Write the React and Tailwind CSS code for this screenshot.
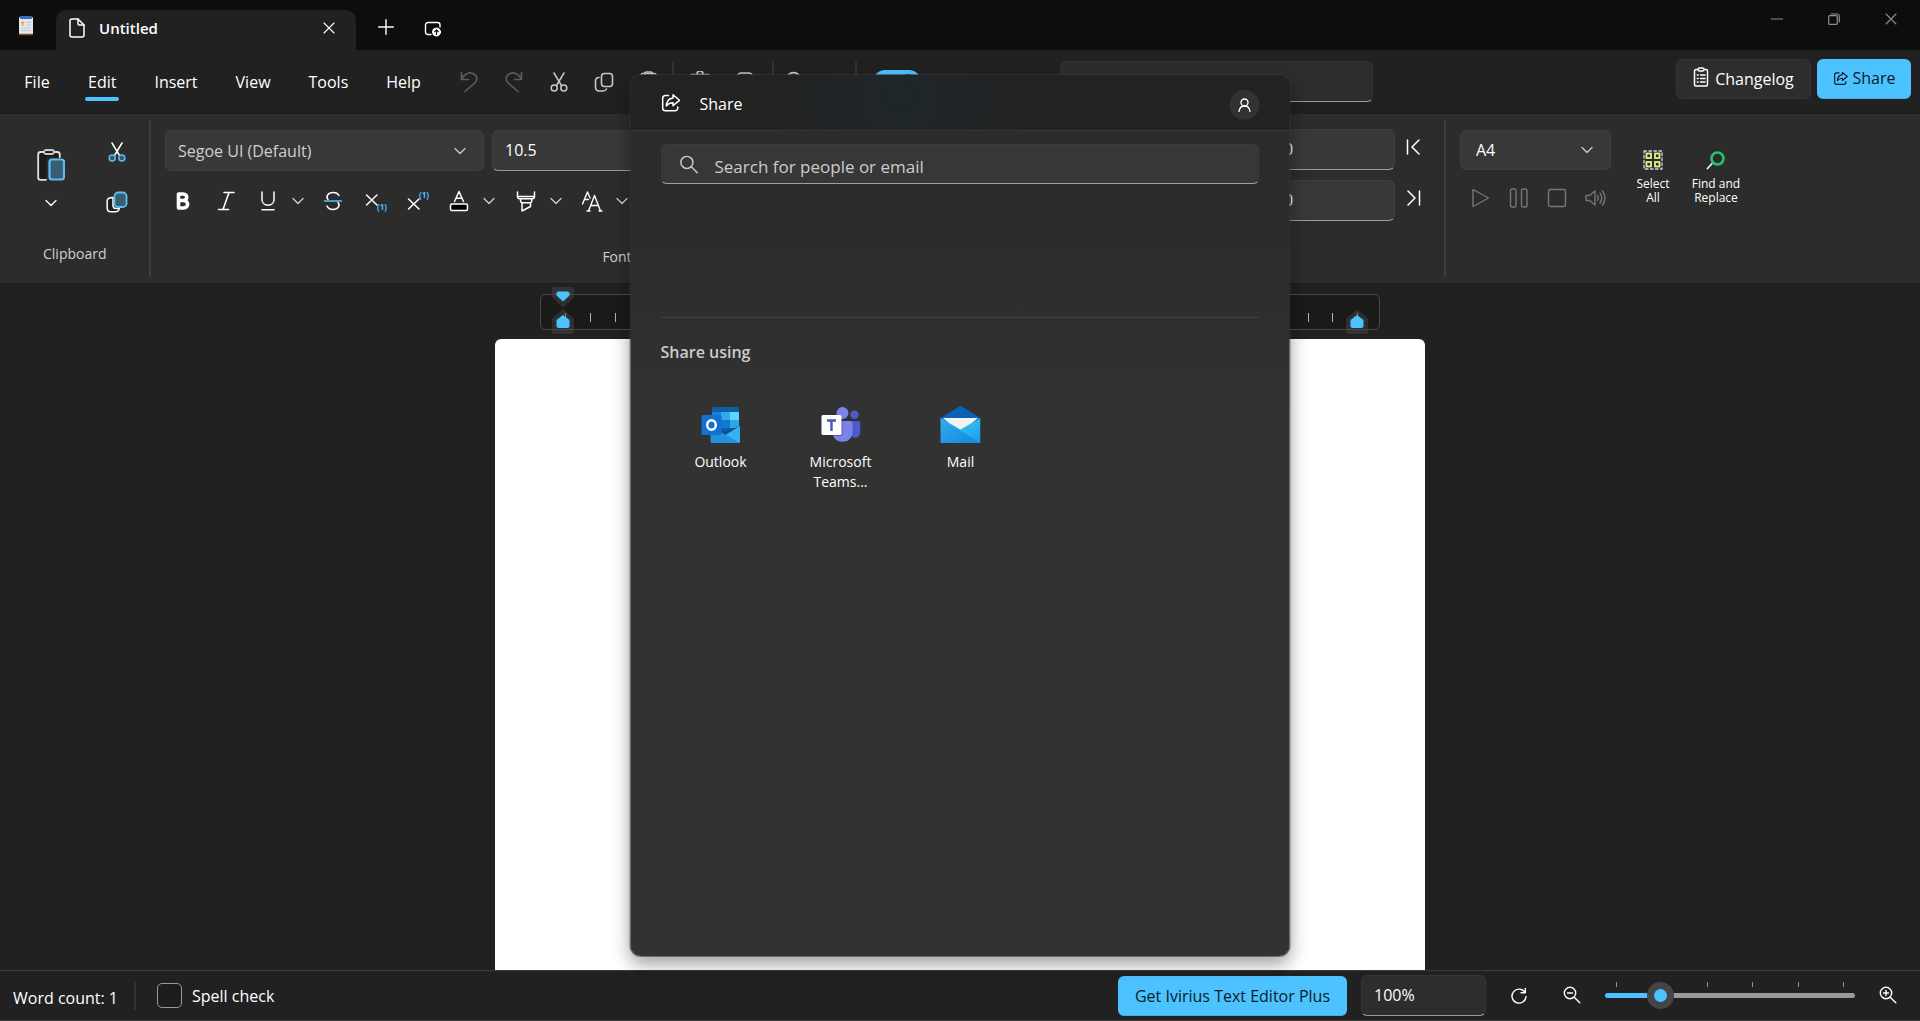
const BLUE = "#4cc2ff";

function Icon({ size = 20, w = size, h = size, box, stroke = 1.3, className = "", children }) {
  return (
    <svg
      width={w}
      height={h}
      viewBox={box || `0 0 ${w} ${h}`}
      fill="none"
      stroke="currentColor"
      strokeWidth={stroke}
      strokeLinecap="round"
      strokeLinejoin="round"
      aria-hidden="true"
      className={`shrink-0 ${className}`}
    >
      {children}
    </svg>
  );
}

const Chevron = ({ className = "" }) => (
  <Icon w={12} h={8} className={className}>
    <path d="M1 1.5 6 6.5l5-5" />
  </Icon>
);

const ShareIcon = ({ size = 20 }) => (
  <Icon size={size} box="0 0 20 20" stroke={1.5}>
    <path d="M8 2.500H5A2.800 2.800 0 0 0 2.200 5.300V15A2.800 2.800 0 0 0 5 17.800h9.500A2.800 2.800 0 0 0 17.300 15v-1" />
    <path d="M12.500 1.800 19 7.300l-6.500 5.400V9.700C9.500 9.600 7.500 10.700 5.800 13c.3-4.400 2.700-7.600 6.700-8.100Z" />
  </Icon>
);

const Scissors = ({ ring = "currentColor", fill = "none" }) => (
  <Icon w={18} h={20} stroke={1.5}>
    <path d="m4 1 7.500 12.500M14 1 6.500 13.500" />
    <circle cx="4.200" cy="16" r="3" stroke={ring} fill={fill} />
    <circle cx="13.800" cy="16" r="3" stroke={ring} fill={fill} />
  </Icon>
);

const CopyIcon = () => (
  <Icon w={20} h={20} stroke={1.6}>
    <rect x="7.500" y="1.500" width="11" height="13" rx="3" />
    <path d="M5 5.500C2.500 5.500 1.500 7 1.500 9v6c0 2.500 1.500 4 4 4H9c2 0 3-1 3.500-2" />
  </Icon>
);

const Magnifier = ({ size = 18, sign }) => (
  <Icon size={size} box="0 0 18 18" stroke={1.4}>
    <circle cx="7" cy="7" r="5.700" />
    <path d="m11.200 11.200 5.600 5.600" />
    {sign && <path d="M4.500 7h5" />}
    {sign === "plus" && <path d="M7 4.500v5" />}
  </Icon>
);

const Close = ({ size = 12 }) => (
  <Icon size={size} box="0 0 12 12" stroke={1.1}>
    <path d="m1 1 10 10M11 1 1 11" />
  </Icon>
);

function TitleBar() {
  return (
    <header className="flex h-[50px] shrink-0 items-end bg-[#0d0d0d]">
      <div className="flex w-[56px] self-start justify-center pt-4 pr-1">
        <svg width="18" height="20" viewBox="0 0 18 20" aria-hidden="true">
          <rect x="2" y="1" width="14" height="18" rx="1" fill="#e4e8ec" />
          <rect x="3" width="12" height="3" rx="1" fill="#3a6fb5" />
          <path d="M2 18.500h14" stroke="#8a4b2c" strokeWidth="1.500" />
          <path d="M4 6.500h3.500M5.700 6.500v3.500" stroke="#f0a040" strokeWidth="1.300" />
          <path d="M9 6.500h5M9 9h5M4 12h10M4 14.500h10" stroke="#c2c8ce" />
        </svg>
      </div>
      <div className="flex h-[40px] w-[300px] items-center rounded-t-[10px] bg-[#212121] pb-1 pl-[13px] pr-[15px]">
        <Icon w={16} h={20} stroke={1.5}>
          <path d="M3 1h6l6 6v10a2 2 0 0 1-2 2H3a2 2 0 0 1-2-2V3a2 2 0 0 1 2-2Z" />
          <path d="M9 1v4.500C9 6.500 9.500 7 10.500 7H15" />
        </Icon>
        <span className="ml-[14px] flex-1 text-[15px] font-semibold">Untitled</span>
        <button aria-label="Close tab" className="flex h-6 w-6 items-center justify-center">
          <Close />
        </button>
      </div>
      <div className="flex items-center self-start pt-[9px]">
        <button aria-label="New tab" className="ml-3 flex h-9 w-9 items-center justify-center">
          <Icon size={16} stroke={1.4}>
            <path d="M8 .700v14.600M.700 8h14.600" />
          </Icon>
        </button>
        <button aria-label="Move tab to new window" className="ml-[11px] flex h-9 w-9 items-center justify-center pt-1">
          <Icon w={18} h={16} stroke={1.4}>
            <path d="M7 13.500H4A2.500 2.500 0 0 1 1.500 11V4A2.500 2.500 0 0 1 4 1.500h9.500A2.500 2.500 0 0 1 16 4v2" />
            <circle cx="12.500" cy="11" r="4" fill="#fff" stroke="#fff" strokeWidth="1" />
            <path d="M12.500 13.300V9m-1.800 1.700 1.800-1.800 1.800 1.800" stroke="#0d0d0d" strokeWidth="1.200" />
          </Icon>
        </button>
      </div>
      <div className="ml-auto flex h-[37px] self-start pr-px text-[#8e8e8e]">
        <button aria-label="Minimize" className="flex w-[57px] items-center justify-center">
          <Icon size={12} stroke={1.2}><path d="M0 6h12" /></Icon>
        </button>
        <button aria-label="Restore" className="flex w-[57px] items-center justify-center">
          <Icon size={12} stroke={1.2}>
            <rect x=".700" y="2.700" width="8.600" height="8.600" rx="1" />
            <path d="M3 1h6.500A2 2 0 0 1 11.300 2.800V9" />
          </Icon>
        </button>
        <button aria-label="Close" className="flex w-[57px] items-center justify-center">
          <Close />
        </button>
      </div>
    </header>
  );
}

const toolButton = "flex h-9 w-[45px] items-center justify-center";
const divider = "h-10 w-[2px] shrink-0 bg-[#333333]";

function MenuBar() {
  return (
    <nav className="flex h-16 shrink-0 items-center border-b border-[#1c1c1c] bg-[#212121]">
      <div className="flex pl-[5px]">
        {["File", "Edit", "Insert", "View", "Tools", "Help"].map((m) => (
          <button key={m} className="flex flex-col items-center px-[19px] pt-2 leading-6">
            {m}
            <span className={`mt-[3px] h-1 w-[34px] -mx-1 rounded-full ${m === "Edit" ? "bg-[#4cc2ff]" : ""}`} />
          </button>
        ))}
      </div>
      <div className="ml-[7px] flex items-center text-[#c8c8c8]">
        <button aria-label="Undo" disabled className={`${toolButton} text-[#5c5c5c]`}>
          <Icon w={18} h={22} stroke={1.6}>
            <path d="M1.500 1.500v7h7M1.500 8C5 2.500 9 .800 13 2.500c4.500 2 4.800 6.500 2 9.300L5 20.500" />
          </Icon>
        </button>
        <button aria-label="Redo" disabled className={`${toolButton} text-[#5c5c5c]`}>
          <Icon w={18} h={22} stroke={1.6}>
            <path d="M16.500 1.500v7h-7M16.500 8C13 2.500 9 .800 5 2.500c-4.500 2-4.800 6.500-2 9.300l10 8.700" />
          </Icon>
        </button>
        <button aria-label="Cut" className={toolButton}><Scissors /></button>
        <button aria-label="Copy" className={toolButton}><CopyIcon /></button>
        <button aria-label="Paste" className={toolButton}>
          <Icon w={20} h={22} stroke={1.6}>
            <rect x="2" y="2.500" width="15" height="18" rx="2" />
            <rect x="5.500" y="1" width="8" height="3.500" rx="1.700" />
          </Icon>
        </button>
        <span className={divider} />
        <button aria-label="Delete" className="ml-1 flex h-9 w-[45px] items-center justify-center">
          <Icon w={20} h={22} stroke={1.6}>
            <path d="M1 3.500h18M7 3a3 3 0 0 1 6 0M3.500 4l1.300 15h10.400L16.500 4" />
          </Icon>
        </button>
        <button aria-label="Select" className={toolButton}>
          <Icon w={18} h={22} stroke={1.6}><rect x="1.500" y="2" width="15" height="18" rx="4" /></Icon>
        </button>
        <span className={`${divider} ml-1`} />
        <button aria-label="Find" className={toolButton}><Magnifier size={22} /></button>
        <span className={`${divider} ml-[36px]`} />
        <label className="ml-4 flex h-6 w-12 items-center justify-end rounded-full bg-[#4cc2ff] p-1 pr-[5px]">
          <input type="checkbox" defaultChecked aria-label="AutoSave" className="h-4 w-4 appearance-none rounded-full bg-[#0d2a3a]" />
        </label>
      </div>
      <input
        aria-label="Search commands"
        className="ml-[139px] mb-px h-[41px] w-[313px] min-w-0 rounded-md border border-[#333] border-b-[#9a9a9a] bg-[#2d2d2d] px-3 outline-none"
      />
      <div className="ml-auto flex gap-[6px] pr-[9px]">
        <button className="mb-[6px] flex h-10 w-[135px] items-center justify-center gap-[6px] rounded-md border border-[#343434] bg-[#2d2d2d]">
          <Icon w={16} h={20} stroke={1.5} className="mb-[3px]">
            <rect x="1.500" y="2.500" width="13" height="16.500" rx="1.500" />
            <rect x="5" y="1" width="6" height="3" rx="1.500" fill="#2d2d2d" />
            <path d="M7.500 8H12M7.500 11.500H12M7.500 15H12M4.300 8h.800M4.300 11.500h.800M4.300 15h.800" />
          </Icon>
          Changelog
        </button>
        <button className="mb-[6px] flex h-10 w-[94px] items-center justify-center gap-[5px] rounded-md border-b border-[#43aee5] bg-[#4cc2ff] text-[#0a1c26]">
          <ShareIcon size={15} />
          Share
        </button>
      </div>
    </nav>
  );
}

function Select({ label, value, className, pad = "px-[12px]" }) {
  return (
    <div className={`relative flex items-center ${className}`}>
      <select
        aria-label={label}
        defaultValue={value}
        className={`h-full w-full appearance-none rounded-md border border-[#3f3f3f] bg-[#383838] outline-none ${pad}`}
      >
        <option>{value}</option>
      </select>
      <Chevron className="pointer-events-none absolute right-[18px] text-[#cccccc]" />
    </div>
  );
}

const field =
  "h-[41px] rounded-md border border-[#3f3f3f] border-b-[#9a9a9a] bg-[#383838] px-[12px] pb-[2px] outline-none";
const fmtButton = "flex h-8 w-[30px] items-center justify-center";
const groupLine = "my-[6px] w-[2px] shrink-0 bg-[#3d3d3d]";

function ScriptIcon({ up }) {
  return (
    <Icon w={22} h={22} stroke={1.5}>
      <path d={up ? "M1.500 9 12 19M12 9 1.500 19" : "M1.500 5 12 15M12 5 1.500 15"} />
      <text
        x="12"
        y={up ? 8 : 20}
        fontSize="8"
        fontWeight="700"
        fontFamily="Open Sans, sans-serif"
        fill={BLUE}
        stroke="none"
      >
        (1)
      </text>
    </Icon>
  );
}

function ClipboardGroup() {
  return (
    <section className="flex w-[149px] shrink-0 flex-col">
      <div className="mt-[23px] flex h-[80px] pl-[30px]">
        <button aria-label="Paste" className="flex w-[42px] flex-col items-center pt-[12px]">
          <Icon w={28} h={32} stroke={1.8}>
            <path d="M8 3H3.500C2 3 1.200 4 1.200 5.500v23c0 1.500.800 2.300 2.300 2.300H9.500V8.500h12V5.500C21.500 4 20.500 3 19 3h-3Z" fill="#1c1c1c" stroke="none" />
            <path d="M7 3H3.500C2 3 1.200 4 1.200 5.500v23c0 1.500.800 2.300 2.300 2.300H9M17 3h3c1.500 0 2.800 1 2.800 2.500V8" stroke="#e0e0e0" />
            <rect x="7" y="1" width="10" height="4" rx="2" stroke="#c8c8c8" />
            <rect x="12.500" y="10.500" width="14.500" height="20" rx="2.500" fill="#3a5d72" stroke="#5cbdf0" strokeWidth="2.200" />
          </Icon>
          <Chevron className="mt-[18px]" />
        </button>
        <div className="ml-[25px] flex w-[40px] flex-col items-center gap-[29px] pt-[5px]">
          <button aria-label="Cut"><Scissors ring="#5cbdf0" fill="#2f5873" /></button>
          <button aria-label="Copy">
            <Icon w={22} h={22} stroke={1.5}>
              <path d="M7 6.500C3 6.500 1.200 7.500 1.200 10v7c0 2.500 1.300 3.800 3.800 3.800h4c2.500 0 4-1.300 4.300-3.300H9.500C7.500 17.500 7 16 7 14Z" fill="#1c1c1c" />
              <rect x="8.500" y="1.500" width="12" height="14.500" rx="3.500" fill="#3a5d72" stroke="#5cbdf0" strokeWidth="1.800" />
            </Icon>
          </button>
        </div>
      </div>
      <p className="mt-[27px] pl-[43px] text-[14px] leading-5 text-[#d0d0d0]">Clipboard</p>
    </section>
  );
}

function FontGroup() {
  return (
    <section className="flex w-[930px] min-w-0 flex-col pl-[14px]">
      <div className="mt-4 flex gap-2 text-[#cfcfcf]">
        <Select label="Font family" value="Segoe UI (Default)" className="h-[41px] w-[319px]" />
        <input aria-label="Font size" defaultValue="10.5" className={`${field} w-[180px] text-white`} />
      </div>
      <div className="mt-[14px] flex items-center">
        <button aria-label="Bold" className={`${fmtButton} ml-[3px]`}>
          <Icon w={16} h={20} stroke={3.6}>
            <path d="M3.500 3H8c5 0 5 6.500 0 6.500H3.500ZM3.500 9.500h5c5.500 0 5.500 7.500 0 7.500h-5Z" />
          </Icon>
        </button>
        <button aria-label="Italic" className={`${fmtButton} ml-[13px]`}>
          <Icon w={18} h={20} stroke={1.6}><path d="M7 1.500h10M1.500 18.500h10M12 1.500l-6 17" /></Icon>
        </button>
        <button aria-label="Underline" className={`${fmtButton} ml-[12px]`}>
          <Icon w={16} h={20} stroke={1.5}><path d="M2 1v7.500c0 7.500 12 7.500 12 0V1M2 18.800h12" /></Icon>
        </button>
        <button aria-label="Underline styles" className={fmtButton}><Chevron className="text-[#cfcfcf]" /></button>
        <button aria-label="Strikethrough" className={`${fmtButton} ml-[5px]`}>
          <Icon w={20} h={20} stroke={1.5}>
            <path d="M16 4.500C15 2.500 13 1.500 10 1.500c-5 0-7.500 4-5 7M4 15c1 2.300 3 3.500 6 3.500 5 0 7.500-4 5-7" />
            <path d="M1.500 10h17" stroke={BLUE} />
          </Icon>
        </button>
        <button aria-label="Subscript" className={`${fmtButton} ml-[13px]`}><ScriptIcon /></button>
        <button aria-label="Superscript" className={`${fmtButton} ml-[12px]`}><ScriptIcon up /></button>
        <button aria-label="Text colour" className={`${fmtButton} ml-[11px]`}>
          <Icon w={20} h={22} stroke={1.5}>
            <path d="m5.500 11.500 4.500-10 4.500 10M7 8.300h6" />
            <rect x="1.500" y="14" width="17" height="6.500" rx="1.500" fill="#000" />
          </Icon>
        </button>
        <button aria-label="Text colours" className={fmtButton}><Chevron className="text-[#cfcfcf]" /></button>
        <button aria-label="Highlight" className={`${fmtButton} ml-[7px]`}>
          <Icon w={20} h={22} stroke={1.5}>
            <path d="M1.500 2v4.500c0 1.500.800 2.300 2.300 2.300h12.400c1.500 0 2.300-.800 2.300-2.300V2M2 6.500h16M4.500 9v1.500c0 1.500.700 2 1.500 2.300h8.500c1-.300 1.300-1 1.300-2.300V9M6 13v8l8.500-4.500V13" />
          </Icon>
        </button>
        <button aria-label="Highlight colours" className={fmtButton}><Chevron className="text-[#cfcfcf]" /></button>
        <button aria-label="Change case" className={`${fmtButton} ml-[6px]`}>
          <Icon w={22} h={22} stroke={1.4}>
            <path d="M1.500 14 6.500 2l2.500 6M3.500 9.500h4M7.500 21l6-15.500 6 15.500M9.500 15.500h8M6 21h3M18 21h3" />
          </Icon>
        </button>
        <button aria-label="Case options" className={fmtButton}><Chevron className="text-[#cfcfcf]" /></button>
      </div>
      <p className="mt-[30px] pr-[12px] text-center text-[14px] leading-5 text-[#d0d0d0]">Font</p>
    </section>
  );
}

function IndentGroup() {
  const rows = [
    ["Left indent", "M1.500 1v14M13 1 6 8l7 7"],
    ["Right indent", "M13.500 1v14M2 1l7 7-7 7"],
  ];
  return (
    <section className="flex w-[363px] shrink-0 flex-col items-end gap-[10px] pr-[22px] pt-[15px]">
      {rows.map(([label, d]) => (
        <div key={label} className="flex items-start">
          <input aria-label={label} defaultValue="0" className={`${field} w-[124px]`} />
          <button aria-label={`Reset ${label.toLowerCase()}`} className="ml-[7px] flex h-[35px] w-[20px] items-center justify-end">
            <Icon w={16} h={16} stroke={1.5}><path d={d} /></Icon>
          </button>
        </div>
      ))}
    </section>
  );
}

function PageGroup() {
  const media = [
    ["Play", "M2 1.500v17L17.500 10Z"],
    ["Pause", "M3 1h2.500q1.500 0 1.500 1.500v15q0 1.500-1.500 1.500H3q-1.500 0-1.500-1.500v-15Q1.500 1 3 1ZM14 1h2.500Q18 1 18 2.500v15q0 1.500-1.500 1.500H14q-1.500 0-1.500-1.500v-15Q12.500 1 14 1Z"],
    ["Stop", "M3.500 1.500h13q2 0 2 2v13q0 2-2 2h-13q-2 0-2-2v-13q0-2 2-2Z"],
    ["Read aloud", "M1 7.500h3.500L10 3v14l-5.500-4.500H1ZM12.500 7.500q1.500 2.500 0 5M15 5q3.500 5 0 10M17.500 2.800q5 7.200 0 14.400"],
  ];
  return (
    <section className="flex pl-[14px] pt-4">
      <div>
        <Select label="Page size" value="A4" className="h-10 w-[151px]" pad="px-[15px]" />
        <div className="mt-[8px] flex pl-[2px] text-[#767676]">
          {media.map(([label, d]) => (
            <button key={label} aria-label={label} disabled className="flex h-10 w-[38px] items-center justify-center">
              <Icon w={22} h={20} stroke={1.4} box="-1 0 22 20"><path d={d} /></Icon>
            </button>
          ))}
        </div>
      </div>
      <button className="ml-[14px] flex w-[50px] flex-col items-center pt-5 text-[12px] leading-[14px]">
        <Icon size={20} stroke={1.8} className="mb-[7px]">
          <rect x="1" y="1" width="18" height="18" stroke="#d8d8d8" strokeWidth="1.300" strokeDasharray="2.500 2.500" />
          <g stroke="#e4f08c" strokeLinejoin="miter">
            <rect x="3.500" y="3.500" width="4.500" height="4.500" />
            <rect x="12" y="3.500" width="4.500" height="4.500" />
            <rect x="3.500" y="12" width="4.500" height="4.500" />
            <rect x="12" y="12" width="4.500" height="4.500" />
          </g>
        </Icon>
        <span>Select<br />All</span>
      </button>
      <button className="ml-[8px] flex w-[60px] flex-col items-center pt-5 text-[12px] leading-[14px]">
        <Icon size={20} className="mb-[7px]">
          <path d="m7 12.500-5.500 6" stroke="#f0f0f0" strokeWidth="1.800" />
          <circle cx="11.500" cy="8.500" r="6" stroke="#1fc76a" strokeWidth="2.600" />
        </Icon>
        <span>Find and<br />Replace</span>
      </button>
    </section>
  );
}

function Ribbon() {
  return (
    <div className="flex h-[170px] shrink-0 border-b border-[#1c1c1c] bg-[#2c2c2c]">
      <ClipboardGroup />
      <span className={groupLine} />
      <FontGroup />
      <IndentGroup />
      <span className={groupLine} />
      <PageGroup />
    </div>
  );
}

function Marker({ down, className }) {
  return (
    <svg width="24" height={down ? 21 : 25} viewBox={down ? "0 0 24 21" : "0 0 24 25"} className={`absolute ${className}`} aria-hidden="true">
      {down ? (
        <>
          <path d="M4 0h16q3 0 3 3v7L12 21 1 10V3q0-3 3-3Z" fill="#4a4a4a" fillOpacity=".45" />
          <path d="M7.500 4.500h9q2 0 2 2v2L12 14.500 5.500 8.500v-2q0-2 2-2Z" fill={BLUE} />
        </>
      ) : (
        <>
          <path d="M12 0l11 10v12q0 3-3 3H4q-3 0-3-3V10Z" fill="#4a4a4a" fillOpacity=".45" />
          <path d="M12 6l6.500 5v6q0 2-2 2h-9q-2 0-2-2v-6Z" fill={BLUE} />
        </>
      )}
    </svg>
  );
}

function Workspace() {
  return (
    <main className="flex min-h-0 flex-1 flex-col items-center bg-[#212121] pt-[10px]">
      <div className="relative flex h-9 w-[840px] shrink-0 items-end justify-between rounded-md border border-[#484848] bg-[#1a1a1a] pb-[7px] pl-[24px] pr-[21px]">
        {Array.from({ length: 33 }, (_, i) => (
          <span key={i} className="h-[9px] w-px bg-[#b4b4b4]" />
        ))}
        <Marker down className="-top-2 left-[10px]" />
        <Marker className="left-[10px] top-[14px]" />
        <Marker className="right-[10px] top-[14px]" />
      </div>
      <article aria-label="Document" className="mt-[9px] min-h-0 w-[930px] flex-1 rounded-t-md bg-white" />
    </main>
  );
}

function StatusBar() {
  return (
    <footer className="flex h-[51px] shrink-0 items-center border-y border-[#3c3c3c] bg-[#212121]">
      <span className="w-[121px] pl-[13px] pt-1">Word count: 1</span>
      <span className="ml-[13px] h-[29px] w-[2px] bg-[#333]" />
      <label className="ml-[21px] flex items-center gap-[10px]">
        <input type="checkbox" className="h-[25px] w-[25px] appearance-none rounded-[5px] border border-[#9a9a9a] bg-[#1d1d1d]" />
        Spell check
      </label>
      <div className="ml-auto flex items-center">
        <button className="h-10 w-[229px] rounded-md border-b border-[#43aee5] bg-[#4cc2ff] pt-[2px] text-[#0a1c26]">
          Get Ivirius Text Editor Plus
        </button>
        <input
          aria-label="Zoom level"
          defaultValue="100%"
          className="ml-[14px] h-[41px] w-[125px] rounded-md border border-[#353535] border-b-[#9a9a9a] bg-[#2d2d2d] px-[12px] pb-[2px] outline-none"
        />
        <button aria-label="Reset zoom" className="ml-[15px] flex h-9 w-9 items-center justify-center">
          <Icon size={18} stroke={1.4}><path d="M15 5.500A7 7 0 1 0 16 9.500M15.300 1.500v4.200H11" /></Icon>
        </button>
        <button aria-label="Zoom out" className="mb-[2px] ml-[17px] flex h-9 w-9 items-center justify-center"><Magnifier sign="minus" /></button>
        <div className="ml-[15px] flex w-[250px] flex-col">
          <div className="flex justify-between pl-[11px] pr-[11px]">
            {Array.from({ length: 6 }, (_, i) => (
              <span key={i} className={`h-[5px] w-px ${i === 1 ? "" : "bg-[#8e8e8e]"}`} />
            ))}
          </div>
          <input
            type="range"
            aria-label="Zoom"
            min="0"
            max="100"
            defaultValue="19"
            className="mt-[-5px] h-[27px] w-full appearance-none bg-transparent [&::-webkit-slider-runnable-track]:h-[5px] [&::-webkit-slider-runnable-track]:rounded-full [&::-webkit-slider-runnable-track]:bg-[linear-gradient(to_right,#4cc2ff_22%,#9a9a9a_22%)] [&::-webkit-slider-thumb]:mt-[-11px] [&::-webkit-slider-thumb]:h-[27px] [&::-webkit-slider-thumb]:w-[27px] [&::-webkit-slider-thumb]:appearance-none [&::-webkit-slider-thumb]:rounded-full [&::-webkit-slider-thumb]:border-[7px] [&::-webkit-slider-thumb]:border-[#454545] [&::-webkit-slider-thumb]:bg-[#4cc2ff]"
          />
        </div>
        <button aria-label="Zoom in" className="mb-[2px] ml-[15px] mr-[14px] flex h-9 w-9 items-center justify-center"><Magnifier sign="plus" /></button>
      </div>
    </footer>
  );
}

const OutlookLogo = () => (
  <svg width="40" height="40" viewBox="0 0 40 40" aria-hidden="true">
    <rect x="11.500" y="2" width="27" height="30" rx="1.500" fill="#0f5ea8" />
    <path d="M11.500 7h9v8h-9Z" fill="#1484d8" />
    <path d="M20.500 7h9v8h-9Z" fill="#33a9ea" />
    <path d="M29.500 7h9v8h-9Z" fill="#56d8ff" />
    <path d="M11.500 15h9v8h-9Z" fill="#0a5cab" />
    <path d="M20.500 15h9v8h-9Z" fill="#0d7bd3" />
    <path d="M29.500 15h9v8h-9Z" fill="#2fa5e8" />
    <path d="m11 23 13 4 15.500-6L24 31H11Z" fill="#0c4c8c" />
    <path d="M39.500 21v15.500q0 1.500-1.500 1.500H11.500Z" fill="#36b2f2" />
    <path d="M10 22v14.500q0 1.500 1.500 1.500H39L23 28.500Z" fill="#1f93e2" />
    <rect x="1" y="10" width="20" height="20" rx="1.500" fill="#1272d0" />
    <ellipse cx="11" cy="20" rx="4.300" ry="4.800" fill="none" stroke="#fff" strokeWidth="2.400" />
  </svg>
);

const TeamsLogo = () => (
  <svg width="40" height="40" viewBox="0 0 40 40" aria-hidden="true">
    <circle cx="34" cy="9.800" r="4.200" fill="#5059c9" />
    <path d="M29 16h9.500q1.500 0 1.500 1.500V26c0 9-11 9-11 0Z" fill="#5059c9" />
    <circle cx="22" cy="8" r="6" fill="#7b83eb" />
    <path d="M13 16h17q2 0 2 2v9c0 13-20 13-20 0V17Z" fill="#7b83eb" />
    <path d="M12 16h10v13q0 2-2 2h-7.300Q12 29 12 27Z" fill="#545bc0" />
    <rect x="1" y="10" width="20" height="20" rx="1.500" fill="#fff" />
    <path d="M6.500 15.500h9M11 15.500V26" stroke="#4b53bc" strokeWidth="2.400" />
  </svg>
);

const MailLogo = () => (
  <svg width="40" height="40" viewBox="0 0 40 40" aria-hidden="true">
    <defs>
      <linearGradient id="mailFront" x1="0" y1="0" x2="1" y2="1">
        <stop offset="0" stopColor="#2fb0ee" />
        <stop offset="1" stopColor="#1484e0" />
      </linearGradient>
      <linearGradient id="mailSide" x1="0" y1="0" x2="1" y2="1">
        <stop offset="0" stopColor="#45d4fb" />
        <stop offset="1" stopColor="#1b9bea" />
      </linearGradient>
    </defs>
    <path d="M0 13 18.500 1.500q1.500-.900 3 0L40 13v3H0Z" fill="#0a62b5" />
    <path d="M2.500 13h35L20 28Z" fill="#f3f3f3" />
    <path d="M0 13 20 24.500 40 13v25H0Z" fill="url(#mailSide)" />
    <path d="M0 13l40 25H1.500Q0 38 0 36.500Z" fill="url(#mailFront)" />
  </svg>
);

function ShareDialog() {
  const apps = [
    ["Outlook", OutlookLogo],
    ["Microsoft Teams...", TeamsLogo],
    ["Mail", MailLogo],
  ];
  return (
    <div
      role="dialog"
      aria-label="Share"
      className="absolute bottom-[65px] left-1/2 top-[75px] flex w-[659px] -translate-x-1/2 flex-col overflow-hidden rounded-[10px] bg-[linear-gradient(to_bottom,#2b2b2b_0,#2c2c2c_170px,#323232_340px,#323232)] shadow-[0_0_0_1px_rgba(60,60,60,0.6),0_8px_18px_rgba(0,0,0,0.38)]"
    >
      <div className="flex h-14 shrink-0 items-center border-b border-[#363636] bg-[#222222] bg-[radial-gradient(circle_at_270px_20px,#1e262a_0,#222222_130px)] px-[30px]">
        <ShareIcon size={20} />
        <h2 className="ml-[19px] pt-[2px]">Share</h2>
        <button aria-label="Account" className="ml-auto mt-1 flex h-[30px] w-[30px] items-center justify-center rounded-full bg-[#323232]">
          <Icon size={14} stroke={1.3}>
            <circle cx="7" cy="4.500" r="3.500" />
            <path d="M1.500 13.500C2 9.500 4 8 7 8s5 1.500 5.500 5.500" />
          </Icon>
        </button>
      </div>
      <div className="px-[30px] pt-[13px]">
        <label className="flex h-10 items-center rounded-md border border-[#3c3c3c] border-b-[#a0a0a0] bg-[#373737] pl-[18px] text-[#cccccc]">
          <Magnifier size={19} />
          <input
            aria-label="Search for people or email"
            placeholder="Search for people or email"
            className="ml-[16px] h-full flex-1 bg-transparent pt-1 text-[17px] outline-none placeholder:text-[#cccccc]"
          />
        </label>
        <hr className="mt-[133px] border-[#3f3f3f]" />
        <h3 className="mt-[22px] text-[16px] font-semibold leading-6 text-[#cccccc]">Share using</h3>
        <div className="mt-[41px] flex">
          {apps.map(([name, Logo]) => (
            <button key={name} className="flex w-[120px] flex-col items-center px-[20px] text-[14px] leading-5">
              <Logo />
              <span className="mt-[7px]">{name}</span>
            </button>
          ))}
        </div>
      </div>
    </div>
  );
}

export default function App() {
  return (
    <div className="relative flex h-screen flex-col overflow-hidden bg-[#212121] font-['Open_Sans','Noto_Sans',sans-serif] text-[16px] text-white">
      <TitleBar />
      <MenuBar />
      <Ribbon />
      <Workspace />
      <StatusBar />
      <ShareDialog />
    </div>
  );
}
